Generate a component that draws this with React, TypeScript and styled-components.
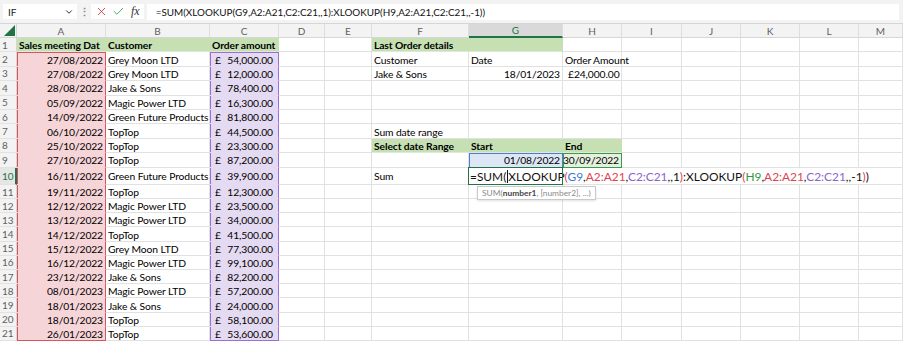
import React from "react";
import styled, { createGlobalStyle, css } from "styled-components";
import { ChevronDown, X, Check } from "lucide-react";

const GlobalStyle = createGlobalStyle`
  html, body { margin: 0; padding: 0; background: #ffffff; }
  body { font-family: Lato, "Open Sans", sans-serif; }
`;

const GRID = "#e1e1e1";
const FONT = `Lato, "Open Sans", sans-serif`;

const colWidths = [17, 89, 104, 69, 46, 47, 97, 94, 59, 60, 59, 59, 59];
const letters = ["A", "B", "C", "D", "E", "F", "G", "H", "I", "J", "K", "L", "M"];
const rowHeights = [
  ...Array(9).fill(14.4),
  17.4,
  ...Array(11).fill(14.2),
];

type Range = { color: string; fill: string };
type CellData = {
  text?: string;
  bold?: boolean;
  right?: boolean;
  fill?: string;
  acct?: boolean;
  range?: Range;
};

const pink: Range = { color: "#d9545e", fill: "#f6d5d8" };
const purple: Range = { color: "#9c6fd6", fill: "#e4daf2" };
const blue: Range = { color: "#4a7fd0", fill: "#dde6f5" };
const green: Range = { color: "#3a9a4a", fill: "#e5f0df" };
const headFill = "#c6e0b4";

const orders: [string, string, string][] = [
  ["27/08/2022", "Grey Moon LTD", "54,000.00"],
  ["27/08/2022", "Grey Moon LTD", "12,000.00"],
  ["28/08/2022", "Jake & Sons", "78,400.00"],
  ["05/09/2022", "Magic Power LTD", "16,300.00"],
  ["14/09/2022", "Green Future Products", "81,800.00"],
  ["06/10/2022", "TopTop", "44,500.00"],
  ["25/10/2022", "TopTop", "23,300.00"],
  ["27/10/2022", "TopTop", "87,200.00"],
  ["16/11/2022", "Green Future Products", "39,900.00"],
  ["19/11/2022", "TopTop", "12,300.00"],
  ["12/12/2022", "Magic Power LTD", "23,500.00"],
  ["13/12/2022", "Magic Power LTD", "34,000.00"],
  ["14/12/2022", "TopTop", "41,500.00"],
  ["15/12/2022", "Grey Moon LTD", "77,300.00"],
  ["16/12/2022", "Magic Power LTD", "99,100.00"],
  ["23/12/2022", "Jake & Sons", "82,200.00"],
  ["08/01/2023", "Magic Power LTD", "57,200.00"],
  ["18/01/2023", "Jake & Sons", "24,000.00"],
  ["18/01/2023", "TopTop", "58,100.00"],
  ["26/01/2023", "TopTop", "53,600.00"],
];

function buildSheet(): CellData[][] {
  const rows: CellData[][] = rowHeights.map(() => letters.map(() => ({})));
  rows[0][0] = { text: "Sales meeting Dat", bold: true, fill: headFill };
  rows[0][1] = { text: "Customer", bold: true, fill: headFill };
  rows[0][2] = { text: "Order amount", bold: true, fill: headFill };
  orders.forEach(([date, customer, amount], i) => {
    rows[i + 1][0] = { text: date, right: true, range: pink };
    rows[i + 1][1] = { text: customer };
    rows[i + 1][2] = { text: amount, acct: true, range: purple };
  });
  rows[0][5] = { text: "Last Order details", bold: true, fill: headFill };
  rows[0][6] = { fill: headFill };
  rows[1][5] = { text: "Customer" };
  rows[1][6] = { text: "Date" };
  rows[1][7] = { text: "Order Amount" };
  rows[2][5] = { text: "Jake & Sons" };
  rows[2][6] = { text: "18/01/2023", right: true };
  rows[2][7] = { text: "24,000.00", acct: true };
  rows[6][5] = { text: "Sum date range" };
  rows[7][5] = { text: "Select date Range", bold: true, fill: headFill };
  rows[7][6] = { text: "Start", bold: true, fill: headFill };
  rows[7][7] = { text: "End", bold: true, fill: headFill };
  rows[8][6] = { text: "01/08/2022", right: true, range: blue };
  rows[8][7] = { text: "30/09/2022", right: true, range: green };
  rows[9][5] = { text: "Sum" };
  return rows;
}

const Page = styled.div`
  width: 903px;
  height: 342px;
  overflow: hidden;
  background: #ffffff;
  font-family: ${FONT};
`;

const FormulaBar = styled.div`
  display: flex;
  align-items: center;
  height: 24px;
  padding: 0 4px 0 3px;
  background: #f3f3f3;
  border-bottom: 1px solid #d6d6d6;
  box-sizing: border-box;
`;

const NameBox = styled.div`
  display: flex;
  align-items: center;
  justify-content: space-between;
  width: 74px;
  height: 15px;
  padding: 0 3px 0 5px;
  box-sizing: border-box;
  background: #ffffff;
  font-size: 10px;
  color: #222;
`;

const Dots = styled.span`
  width: 12px;
  margin-left: 1px;
  text-align: center;
  color: #8a8a8a;
  font-size: 11px;
  font-weight: 700;
`;

const ButtonGroup = styled.div`
  display: flex;
  align-items: center;
  gap: 4px;
  height: 15px;
  padding: 0 4px;
  margin-left: 1px;
  margin-right: 3px;
  background: #ffffff;
`;

const Fx = styled.span`
  font-family: "Liberation Serif", serif;
  font-style: italic;
  font-size: 12px;
  color: #333;
  margin-left: 2px;
`;

const FormulaInput = styled.div`
  flex: 1;
  height: 16px;
  display: flex;
  align-items: center;
  padding-left: 9px;
  background: #ffffff;
  font-size: 9.9px;
  color: #111;
  white-space: nowrap;
`;

const Sheet = styled.div<{ $cols: string; $rows: string }>`
  display: grid;
  grid-template-columns: ${(p) => p.$cols};
  grid-template-rows: ${(p) => p.$rows};
`;

const Corner = styled.div`
  background: #f3f3f3;
  border-right: 1px solid #d6d6d6;
  border-bottom: 1px solid #d6d6d6;
  display: flex;
  align-items: flex-end;
  justify-content: flex-end;
  padding: 0 1px 1px 0;
`;

const ColHead = styled.div<{ $active?: boolean }>`
  background: ${(p) => (p.$active ? "#d9d9d9" : "#f3f3f3")};
  border-right: 1px solid #dedede;
  border-bottom: ${(p) => (p.$active ? "2px solid #217346" : "1px solid #d6d6d6")};
  color: ${(p) => (p.$active ? "#217346" : "#5f5f5f")};
  font-size: 10px;
  display: flex;
  align-items: center;
  justify-content: center;
  box-sizing: border-box;
`;

const RowHead = styled.div<{ $active?: boolean }>`
  background: ${(p) => (p.$active ? "#e6e6e6" : "#f3f3f3")};
  border-bottom: 1px solid #e2e2e2;
  border-right: ${(p) => (p.$active ? "2px solid #217346" : "1px solid #d6d6d6")};
  color: ${(p) => (p.$active ? "#217346" : "#5f5f5f")};
  font-size: 10px;
  display: flex;
  align-items: center;
  padding-left: 2px;
  box-sizing: border-box;
`;

const Cell = styled.div<{
  $fill?: string;
  $bold?: boolean;
  $right?: boolean;
  $edge?: { color: string; t: boolean; b: boolean };
}>`
  display: flex;
  align-items: center;
  justify-content: ${(p) => (p.$right ? "flex-end" : "flex-start")};
  padding: 1px ${(p) => (p.$right ? "2px" : "1px")} 0 2px;
  box-sizing: border-box;
  min-width: 0;
  font-size: 10.3px;
  letter-spacing: -0.1px;
  font-weight: ${(p) => (p.$bold ? 700 : 400)};
  color: #000;
  white-space: nowrap;
  background: ${(p) => p.$fill ?? "transparent"};
  border-right: 1px solid ${(p) => (p.$fill ? p.$fill : GRID)};
  border-bottom: 1px solid ${(p) => (p.$fill ? "#dfe9d8" : GRID)};
  ${(p) =>
    p.$edge &&
    css`
      border-right-color: ${p.$edge.color};
      border-bottom-color: ${p.$edge.b ? p.$edge.color : "transparent"};
      box-shadow: inset 1px 0 0 ${p.$edge.color}
        ${p.$edge.t ? `, inset 0 1px 0 ${p.$edge.color}` : ""};
    `}
`;

const Acct = styled.div`
  display: flex;
  justify-content: space-between;
  width: 100%;
  padding: 0 4px 0 3px;
  box-sizing: border-box;
`;

const EditCell = styled.div`
  position: relative;
  display: flex;
  align-items: center;
  margin: -1px 0 0 -1px;

  &::after {
    content: "";
    position: absolute;
    inset: 0;
    z-index: 3;
    border: 1.5px solid #217346;
    pointer-events: none;
  }
`;

const EditText = styled.div`
  position: relative;
  z-index: 2;
  padding: 1px 2px 0 2px;
  background: #ffffff;
  font-size: 11.9px;
  white-space: nowrap;
  color: #111;
`;

const Caret = styled.span`
  display: inline-block;
  width: 1px;
  height: 13px;
  margin: 0 0.5px -2px 0.5px;
  background: #111;
`;

const Tip = styled.div`
  position: absolute;
  z-index: 4;
  left: 9px;
  top: 19px;
  padding: 1px 4px;
  background: #ffffff;
  border: 1px solid #c9c9c9;
  box-shadow: 0 1px 2px rgba(0, 0, 0, 0.12);
  font-size: 8.4px;
  color: #8a8a8a;
  white-space: nowrap;
  b { color: #444; }
`;

const Ref = styled.span<{ $c: string }>`
  color: ${(p) => p.$c};
`;

const RED = "#e0424c";
const BLUE = "#3c78d8";
const PURPLE = "#8e62c8";
const GREEN = "#2f9a3c";

function FormulaEditor() {
  return (
    <EditCell>
      <EditText>
        =SUM(<Caret />XLOOKUP<Ref $c={RED}>(</Ref>
        <Ref $c={BLUE}>G9</Ref>,<Ref $c={RED}>A2:A21</Ref>,
        <Ref $c={PURPLE}>C2:C21</Ref>,,1<Ref $c={RED}>)</Ref>:XLOOKUP
        <Ref $c={RED}>(</Ref>
        <Ref $c={GREEN}>H9</Ref>,<Ref $c={RED}>A2:A21</Ref>,
        <Ref $c={PURPLE}>C2:C21</Ref>,,-1<Ref $c={RED}>)</Ref>)
      </EditText>
      <Tip>
        SUM(<b>number1</b>, [number2], ...)
      </Tip>
    </EditCell>
  );
}

export default function App() {
  const sheet = buildSheet();
  const cols = colWidths.map((w) => `${w}px`).join(" ") + " 1fr";
  const rows = ["14px", ...rowHeights.map((h) => `${h}px`)].join(" ");

  return (
    <Page>
      <GlobalStyle />
      <FormulaBar>
        <NameBox>
          IF
          <ChevronDown size={10} strokeWidth={2.4} color="#333" />
        </NameBox>
        <Dots>⋮</Dots>
        <ButtonGroup>
          <X size={13} strokeWidth={1.6} color="#d13438" />
          <Check size={13} strokeWidth={1.6} color="#2e9e45" />
          <Fx>fx</Fx>
        </ButtonGroup>
        <FormulaInput>
          =SUM(XLOOKUP(G9,A2:A21,C2:C21,,1):XLOOKUP(H9,A2:A21,C2:C21,,-1))
        </FormulaInput>
      </FormulaBar>
      <Sheet $cols={cols} $rows={rows}>
        <Corner>
          <svg width="11" height="11" viewBox="0 0 11 11">
            <polygon points="11,0 11,11 0,11" fill="#217346" />
          </svg>
        </Corner>
        {letters.map((l) => (
          <ColHead key={l} $active={l === "G"}>
            {l}
          </ColHead>
        ))}
        {sheet.map((row, r) => (
          <React.Fragment key={r}>
            <RowHead $active={r === 9}>{r + 1}</RowHead>
            {row.map((c, ci) => {
              if (r === 9 && ci === 6) return <FormulaEditor key={ci} />;
              const range = c.range;
              const edge = range
                ? {
                    color: range.color,
                    t: r === 0 || sheet[r - 1][ci].range !== range,
                    b: r === sheet.length - 1 || sheet[r + 1][ci].range !== range,
                  }
                : undefined;
              return (
                <Cell
                  key={ci}
                  $fill={range ? range.fill : c.fill}
                  $bold={c.bold}
                  $right={c.right}
                  $edge={edge}
                >
                  {c.acct ? (
                    <Acct>
                      <span>£</span>
                      <span>{c.text}</span>
                    </Acct>
                  ) : (
                    c.text
                  )}
                </Cell>
              );
            })}
          </React.Fragment>
        ))}
      </Sheet>
    </Page>
  );
}
